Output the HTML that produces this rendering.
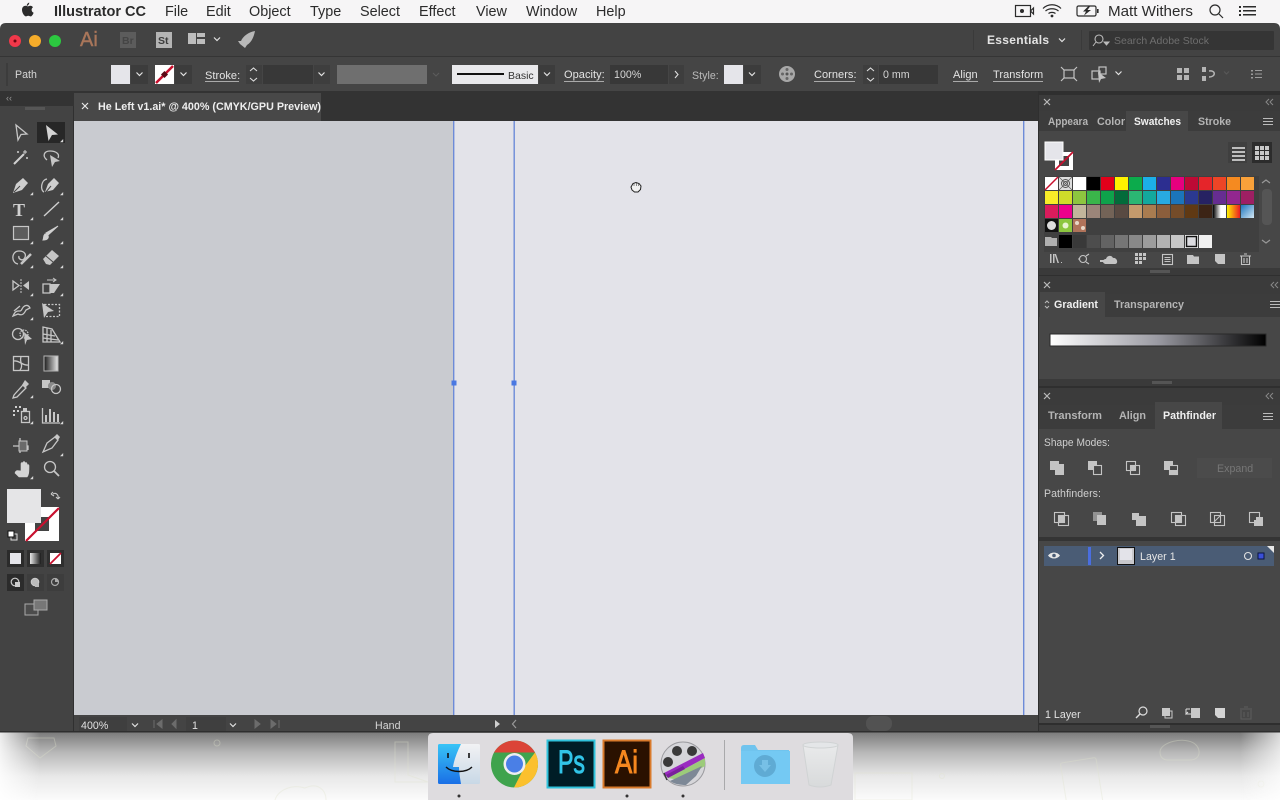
<!DOCTYPE html>
<html><head><meta charset="utf-8"><title>Illustrator CC</title>
<style>
html,body{margin:0;padding:0;background:#fff;width:1280px;height:800px;overflow:hidden}
svg{display:block}
text{font-family:"Liberation Sans",sans-serif}
.m{font-size:14.4px;fill:#2b2b2b}
.c{font-size:10.6px;fill:#d6d6d6;letter-spacing:.05px}
.cb{font-size:11px;fill:#e4e4e4;letter-spacing:.05px}
.tab{font-size:10.6px;fill:#b4b4b4;font-weight:bold}
.ta{font-size:10.6px;fill:#f0f0f0;font-weight:bold}
.i{fill:none;stroke:#c6c6c6;stroke-width:1.3}
.f{fill:#c6c6c6;stroke:none}
.s{fill:none;stroke:#cfcfcf;stroke-width:1.2}
</style></head><body>
<svg width="1280" height="800" viewBox="0 0 1280 800" xmlns="http://www.w3.org/2000/svg">
<defs>
<linearGradient id="wall" x1="0" y1="0" x2="0" y2="1"><stop offset="0" stop-color="#7a7a7a"/><stop offset=".3" stop-color="#b8b8b8"/><stop offset=".65" stop-color="#e8e8e8"/><stop offset="1" stop-color="#fbfbfb"/></linearGradient>
<linearGradient id="wl" x1="0" x2="1" y1="0" y2="0"><stop offset="0" stop-color="#fff" stop-opacity=".85"/><stop offset="1" stop-color="#fff" stop-opacity="0"/></linearGradient>
<linearGradient id="wr" x1="1" x2="0" y1="0" y2="0"><stop offset="0" stop-color="#fff" stop-opacity=".7"/><stop offset="1" stop-color="#fff" stop-opacity="0"/></linearGradient>
<linearGradient id="gr" x1="0" x2="1" y1="0" y2="0"><stop offset="0" stop-color="#fff"/><stop offset=".5" stop-color="#9a9aa2"/><stop offset="1" stop-color="#000"/></linearGradient>
<linearGradient id="g1" x1="0" x2="1" y1="0" y2="0"><stop offset="0" stop-color="#000"/><stop offset=".6" stop-color="#fff"/></linearGradient>
<linearGradient id="g2" x1="0" x2="1" y1="0" y2="0"><stop offset="0" stop-color="#fff200"/><stop offset="1" stop-color="#ed1c24"/></linearGradient>
<linearGradient id="g3" x1="0" x2="1" y1="0" y2="1"><stop offset="0" stop-color="#1c75bc"/><stop offset="1" stop-color="#d4e8f5"/></linearGradient>
<linearGradient id="g4" x1="0" x2="0" y1="0" y2="1"><stop offset="0" stop-color="#e8e8e8"/><stop offset="1" stop-color="#1b1b1b"/></linearGradient>
<linearGradient id="fin" x1="0" x2="0" y1="0" y2="1"><stop offset="0" stop-color="#38c4f6"/><stop offset="1" stop-color="#1a6fe6"/></linearGradient>
<linearGradient id="fin2" x1="0" x2="0" y1="0" y2="1"><stop offset="0" stop-color="#f2f2f4"/><stop offset="1" stop-color="#c8d8e6"/></linearGradient>
<linearGradient id="tr" x1="0" x2="0" y1="0" y2="1"><stop offset="0" stop-color="#e9eaeb"/><stop offset="1" stop-color="#d8dadb"/></linearGradient>
<path id="t" d="M0 3.2L3.2 3.2L3.2 0Z" fill="#d8d8d8"/>
<path id="cv" d="M-3 -1.5L0 1.5L3 -1.5" fill="none" stroke="#e2e2e2" stroke-width="1.2"/>
</defs>

<!-- wallpaper -->
<rect x="0" y="732" width="1280" height="68" fill="url(#wall)"/>
<g fill="none" stroke="#dfe3cb" stroke-width="1" opacity=".35">
<path d="M28 738L54 738L56 746L40 758L26 746Z"/>
<path d="M395 742L408 742L408 775L428 782L395 782Z"/>
<path d="M275 800C278 790 292 784 305 788C318 782 326 790 326 800"/>
<rect x="1064" y="760" width="36" height="50" rx="2" transform="rotate(-9 1082 785)"/>
<path d="M1160 752C1160 742 1185 736 1195 744C1202 750 1200 760 1190 760L1168 760C1163 760 1160 757 1160 752Z"/>
<path d="M855 773L912 773L912 800L855 800Z"/>
<circle cx="942" cy="776" r="2.5"/><circle cx="217" cy="743" r="3"/><circle cx="1261" cy="784" r="3"/>
</g>
<rect x="0" y="732" width="40" height="68" fill="url(#wl)"/>
<rect x="1240" y="732" width="40" height="68" fill="url(#wr)"/>

<!-- menu bar -->
<rect x="0" y="0" width="1280" height="23" fill="#f6f5f6"/>
<path fill="#2b2b2b" d="M27.8 5.6c.8-1 1.4-1.6 1.500-3-1.200.2-2.300 1.200-2.700 2.900.5.2.9.2 1.200.1zM31.600 9.700c0-1.600 1.200-2.300 1.400-2.500-.8-1.100-2-1.400-2.500-1.400-1-.1-1.900.6-2.600.6-.6 0-1.400-.6-2.300-.6-1.900 0-3.600 1.400-3.600 4.100 0 2.900 2.300 6.500 4 6.500.8 0 1.300-.6 2.300-.6 1 0 1.300.6 2.200.6 1.400 0 2.600-2.200 3.100-3.700-1.200-.5-2-1.400-2-2.900z"/>
<text x="54" y="16" class="m" style="font-weight:bold" textLength="92" lengthAdjust="spacingAndGlyphs">Illustrator CC</text>
<text x="165" y="16" class="m">File</text>
<text x="206" y="16" class="m">Edit</text>
<text x="249" y="16" class="m">Object</text>
<text x="310" y="16" class="m">Type</text>
<text x="360" y="16" class="m">Select</text>
<text x="419" y="16" class="m">Effect</text>
<text x="476" y="16" class="m">View</text>
<text x="526" y="16" class="m">Window</text>
<text x="596" y="16" class="m">Help</text>
<g fill="none" stroke="#2b2b2b" stroke-width="1.2">
<rect x="1015.5" y="5.5" width="15" height="11"/><path d="M1033.5 8L1030.5 11L1033.5 14Z"/>
<path d="M1043 8.5C1048 3.5 1056 3.5 1061 8.5M1045.5 11C1049 8 1055 8 1058.5 11M1048.5 13.5C1050.5 12 1053.5 12 1055.5 13.5"/>
<rect x="1077" y="6" width="19" height="10" rx="1.5"/>
<circle cx="1215" cy="10" r="5"/><path d="M1219 14L1223 18"/>
</g>
<circle cx="1022" cy="11" r="2" fill="#2b2b2b"/>
<circle cx="1052" cy="16" r="1.4" fill="#2b2b2b"/>
<path d="M1088 6.5L1083 11.5L1086 11.5L1084 15.5L1091 10L1087.5 10L1090 6.5Z" fill="#2b2b2b"/>
<rect x="1097" y="9" width="1.6" height="4" fill="#2b2b2b"/>
<text x="1108" y="16" class="m" textLength="85" lengthAdjust="spacingAndGlyphs">Matt Withers</text>
<g fill="#2b2b2b"><rect x="1239" y="6" width="2" height="2"/><rect x="1239" y="10" width="2" height="2"/><rect x="1239" y="14" width="2" height="2"/><rect x="1243" y="6" width="13" height="1.5"/><rect x="1243" y="10" width="13" height="1.5"/><rect x="1243" y="14" width="13" height="1.5"/></g>

<!-- window chrome -->
<path d="M0 29Q0 23 6 23L1274 23Q1280 23 1280 29L1280 732L0 732Z" fill="#434343"/>
<rect x="0" y="56" width="1280" height="1" fill="#353535"/>
<rect x="0" y="57" width="1280" height="34" fill="#454545"/>
<rect x="0" y="91" width="1280" height="30" fill="#333"/>

<!-- app bar -->
<circle cx="15" cy="41" r="6" fill="#f0384a"/><circle cx="15" cy="41" r="1.5" fill="#6a0510"/>
<circle cx="35" cy="41" r="6" fill="#f5ac2a"/>
<circle cx="55" cy="41" r="6" fill="#2cc840"/>
<text x="80" y="46" style="font-size:20px;fill:#a9765a;stroke:#a9765a;stroke-width:.4">Ai</text>
<rect x="120" y="32" width="16" height="16" fill="#5c5c5c"/><text x="122" y="44" style="font-size:10.5px;fill:#454545;font-weight:bold">Br</text>
<rect x="156" y="32" width="16" height="16" fill="#b4b4b4"/><text x="158" y="44" style="font-size:10.5px;fill:#3d3d3d;font-weight:bold">St</text>
<path d="M188 33H196V44H188ZM197 33H205V37H197ZM197 39H205V44H197Z" fill="#bdbdbd"/>
<use href="#cv" x="217" y="39"/>
<path d="M255 31C249 32 243 36 241 41L238 41L240 44L245 48L247 45C252 42 254 36 255 31Z" fill="#b8b8b8"/>
<rect x="973" y="30" width="1" height="20" fill="#3a3a3a"/><rect x="1081" y="30" width="1" height="20" fill="#3a3a3a"/>
<text x="987" y="44" style="font-size:12px;fill:#e4e4e4;font-weight:bold" textLength="62" lengthAdjust="spacing">Essentials</text>
<use href="#cv" x="1062" y="40"/>
<rect x="1089" y="31" width="185" height="19" rx="1" fill="#353535"/>
<circle cx="1099" cy="39" r="4" fill="none" stroke="#bbb" stroke-width="1.100"/><path d="M1096 42L1093 46M1104 42L1109 42L1106.500 45Z" stroke="#bbb" fill="#bbb" stroke-width="1"/>
<text x="1114" y="44" style="font-size:10.500px;fill:#6e6e6e" textLength="95" lengthAdjust="spacingAndGlyphs">Search Adobe Stock</text>

<!-- control bar -->
<rect x="6" y="63" width="2" height="23" fill="#3c3c3c"/>
<text x="15" y="78" class="c">Path</text>
<rect x="111" y="65" width="19" height="19" fill="#e5e5ea"/>
<rect x="131" y="65" width="17" height="19" fill="#3c3c3c"/><use href="#cv" x="139.500" y="74"/>
<rect x="155" y="65" width="19" height="19" fill="#fff"/><path d="M156 83L173 66" stroke="#c8102e" stroke-width="2.500"/><rect x="162" y="72" width="5" height="5" fill="#5a0a15" transform="rotate(45 164.500 74.500)"/>
<rect x="175" y="65" width="17" height="19" fill="#3c3c3c"/><use href="#cv" x="183.500" y="74"/>
<text x="205" y="79" class="cb">Stroke:</text><rect x="205" y="81" width="34" height="1" fill="#aaa"/>
<rect x="246" y="65" width="16" height="19" fill="#3e3e3e"/><rect x="263" y="65" width="50" height="19" fill="#383838"/><rect x="314" y="65" width="16" height="19" fill="#3e3e3e"/>
<path d="M250 71L253.500 68L257 71M250 78L253.500 81L257 78" fill="none" stroke="#ddd" stroke-width="1.100"/>
<use href="#cv" x="321.500" y="74"/>
<rect x="337" y="65" width="90" height="19" fill="#6f6f6f"/>
<path d="M433 73L436 76L439 73" fill="none" stroke="#5c5c5c" stroke-width="1.100"/>
<rect x="452" y="65" width="86" height="19" fill="#e9e9ec"/><rect x="457" y="73" width="47" height="2" fill="#111"/>
<text x="508" y="79" style="font-size:10.500px;fill:#333">Basic</text>
<rect x="539" y="65" width="16" height="19" fill="#3c3c3c"/><use href="#cv" x="547" y="74"/>
<text x="564" y="78" class="cb">Opacity:</text><rect x="564" y="81" width="40" height="1" fill="#aaa"/>
<rect x="610" y="65" width="58" height="19" fill="#383838"/><rect x="669" y="65" width="15" height="19" fill="#3e3e3e"/>
<text x="614" y="78" class="c">100%</text>
<path d="M675 71L678 74.500L675 78" fill="none" stroke="#ddd" stroke-width="1.100"/>
<text x="692" y="79" class="c" style="fill:#bbb">Style:</text>
<rect x="724" y="65" width="19" height="19" fill="#e5e5ea"/>
<rect x="744" y="65" width="17" height="19" fill="#3c3c3c"/><use href="#cv" x="752" y="74"/>
<circle cx="787" cy="74" r="8" fill="#a8a8a8"/><circle cx="787" cy="74" r="1.500" fill="#555"/><g fill="#666"><circle cx="787" cy="69.500" r="1.500"/><circle cx="791.500" cy="74" r="1.500"/><circle cx="787" cy="78.500" r="1.500"/><circle cx="782.500" cy="74" r="1.500"/></g>
<text x="814" y="78" class="cb">Corners:</text><rect x="814" y="81" width="41" height="1" fill="#aaa"/>
<rect x="863" y="65" width="15" height="19" fill="#3e3e3e"/><rect x="879" y="65" width="59" height="19" fill="#383838"/>
<path d="M867 71L870.500 68L874 71M867 78L870.500 81L874 78" fill="none" stroke="#ddd" stroke-width="1.100"/>
<text x="883" y="78" class="c">0 mm</text>
<text x="953" y="78" class="cb">Align</text><rect x="953" y="81" width="25" height="1" fill="#aaa"/>
<text x="993" y="78" class="cb">Transform</text><rect x="993" y="81" width="50" height="1" fill="#aaa"/>
<g fill="none" stroke="#c4c4c4" stroke-width="1.200">
<rect x="1064" y="70" width="10" height="8"/><path d="M1061 67L1064 70M1077 67L1074 70M1061 81L1064 78M1077 81L1074 78"/>
<rect x="1092" y="71" width="8" height="8"/><rect x="1099" y="67" width="7" height="7"/>
</g>
<path d="M1098 72L1106 78L1101 79L1099 83Z" fill="#c4c4c4"/>
<use href="#cv" x="1118.500" y="73"/>
<path d="M1177 68H1182V73H1177ZM1184 68H1189V73H1184ZM1177 75H1182V80H1177ZM1184 75H1189V80H1184Z" fill="#b4b4b4"/>
<path d="M1202 67H1206V72H1202ZM1202 76H1206V81H1202Z" fill="#b4b4b4"/><path d="M1209 71C1216 70 1216 77 1209 77" fill="none" stroke="#b4b4b4" stroke-width="1.500"/>
<path d="M1224 71.500L1226.500 74L1229 71.500" stroke="#595959" fill="none"/>
<path d="M1251 70H1253V71.500H1251ZM1251 73.500H1253V75H1251ZM1251 77H1253V78.500H1251ZM1255 70H1262V71H1255ZM1255 73.500H1262V74.500H1255ZM1255 77H1262V78H1255Z" fill="#9c9c9c"/>

<!-- tab row -->
<rect x="74" y="93" width="247" height="28" fill="#484848"/>
<path d="M82 103L88 109M88 103L82 109" stroke="#e8e8e8" stroke-width="1.200"/>
<text x="98" y="110" style="font-size:11px;fill:#eeeeee;font-weight:bold" textLength="223" lengthAdjust="spacingAndGlyphs">He Left v1.ai* @ 400% (CMYK/GPU Preview)</text>

<!-- canvas -->
<rect x="74" y="121" width="380" height="594" fill="#c9cbd0"/>
<rect x="454" y="121" width="584" height="594" fill="#e3e3e9"/>
<rect x="453" y="121" width="1.400" height="594" fill="#6d8bd8"/>
<rect x="513.500" y="121" width="1.400" height="594" fill="#6d8bd8"/>
<rect x="1023" y="121" width="1.400" height="594" fill="#6d8bd8"/>
<rect x="451.500" y="380.500" width="5" height="5" fill="#4a78e2"/><rect x="511.500" y="380.500" width="5" height="5" fill="#4a78e2"/>
<path d="M631 187L633 183.500L636 182.500L639 183.500L641 186L640.500 189.500L638 192H634.500L632 190Z" fill="#f2f2f2" stroke="#222" stroke-width="1"/>
<path d="M634 183.500V186M636.300 183V186M638.500 184V186" stroke="#444" stroke-width=".6"/>

<!-- status bar -->
<rect x="74" y="715" width="964" height="17" fill="#444"/>
<rect x="79" y="717" width="48" height="15" fill="#3f3f3f"/>
<text x="81" y="729" class="c" style="fill:#e2e2e2">400%</text>
<use href="#cv" x="135" y="725"/>
<path d="M154 720V728M162 720L157 724L162 728Z M176 720L172 724L176 728Z" fill="#6c6c6c" stroke="#6c6c6c"/>
<rect x="186" y="717" width="40" height="15" fill="#3f3f3f"/>
<text x="192" y="729" class="c" style="fill:#e2e2e2">1</text>
<use href="#cv" x="233" y="725"/>
<path d="M255 720L260 724L255 728Z M271 720L276 724L271 728Z M279 720V728" fill="#6c6c6c" stroke="#6c6c6c"/>
<text x="375" y="729" class="c" style="fill:#d6d6d6">Hand</text>
<path d="M495 720L500 724L495 728Z" fill="#cfcfcf"/>
<path d="M516 720L512.500 724L516 728" fill="none" stroke="#9a9a9a" stroke-width="1.200"/>
<rect x="866" y="716" width="26" height="15" rx="7" fill="#525252"/>

<!-- toolbox -->
<rect x="0" y="91" width="74" height="641" fill="#434343"/>
<rect x="0" y="91" width="74" height="15" fill="#333"/>
<text x="6" y="101" style="font-size:9px;fill:#9a9a9a">‹‹</text>
<rect x="25" y="107" width="20" height="3" fill="#565656"/>
<rect x="37" y="122" width="28" height="21" fill="#272727"/>
<!-- selection -->
<path d="M16 125L27 134L21 134.500L18 140Z" class="i"/>
<path d="M46 125L58 134.500L52 135L48.500 141Z" fill="#d4d4d4"/><use href="#t" x="60" y="139"/>
<!-- wand / lasso -->
<path d="M14 164L24 154" stroke="#d0d0d0" stroke-width="2"/><path d="M25 150V154M23 152H27M18 151V153M17 152H19M27 157V159M26 158H28" stroke="#d0d0d0"/>
<path d="M47 160C42 156 44 151 50 151C56 151 60 154 58 158" class="i"/><path d="M50 155L60 161L55 162L52 167Z" class="f"/>
<!-- pen / curvature -->
<path d="M13 193L16 184L23 178L28 183L22 190Z" fill="#cfcfcf"/><path d="M14 192L20 186" stroke="#434343"/><use href="#t" x="30" y="192"/>
<path d="M45 192L48 184L54 178L59 183L53 190Z" fill="#cfcfcf"/><path d="M46 192L51 186" stroke="#434343"/><path d="M47 179C41 180 40 190 44 192" class="i"/><use href="#t" x="60" y="192"/>
<!-- type / line -->
<text x="13" y="216" style="font-family:'Liberation Serif',serif;font-size:18px;font-weight:bold;fill:#d0d0d0">T</text><use href="#t" x="30" y="217"/>
<path d="M44 216L59 202" stroke="#cfcfcf" stroke-width="1.400"/><use href="#t" x="60" y="217"/>
<!-- rect / brush -->
<rect x="13.500" y="226.500" width="15" height="13" fill="#5c5c5c" stroke="#c6c6c6" stroke-width="1.200"/><use href="#t" x="30" y="241"/>
<path d="M58 226L48 235L46 233Z M45 234C47 234 49 236 48 238C47 240 44 240 43 240C44 238 43 236 45 234Z" fill="#d0d0d0" stroke="#d0d0d0"/><use href="#t" x="60" y="241"/>
<!-- shaper / eraser -->
<path d="M18 264C11 263 11 251 19 251C25 251 27 255 24 259C22 261 18 259 19 256" class="i"/><path d="M21 264L31 254" stroke="#c6c6c6" stroke-width="2.500"/><use href="#t" x="30" y="265"/>
<path d="M43 259L52 250L59 256L50 265L46 264Z" class="f"/><path d="M46 256L53 262" stroke="#434343"/><use href="#t" x="60" y="265"/>
<!-- reflect / shear -->
<path d="M13 281L19 285.500L13 290Z" class="i"/><path d="M29 281L23 285.500L29 290Z" class="f"/><path d="M21 279V293" stroke="#c6c6c6" stroke-dasharray="2 1"/><use href="#t" x="30" y="293"/>
<path d="M43 284H50V293H43Z" class="i"/><path d="M50 284H60L54 293H50Z" class="f"/><path d="M47 280H55M53 278L56 280L53 282" stroke="#c6c6c6" fill="none"/><use href="#t" x="60" y="293"/>
<!-- warp / free transform -->
<path d="M13 316C17 307 20 314 22 309C24 305 28 304 30 308L26 310C24 314 22 316 18 314ZM14 311L20 306" class="i" stroke-width="1.500"/><use href="#t" x="30" y="317"/>
<rect x="44.500" y="304.500" width="15" height="12" class="i" stroke-dasharray="2 1.500"/><path d="M42 303L54 311L48 312L44 318Z" class="f"/>
<!-- shape builder / perspective grid -->
<circle cx="18" cy="334" r="5.500" class="i"/><circle cx="24" cy="334" r="4" class="i" stroke-dasharray="1.500 1"/><path d="M24 332L32 339L27 340L25 345Z" class="f"/>
<path d="M43 327L43 342L60 342L52 329Z M47 328V342M51 330V342M43 334L55 336M43 338L58 340" class="i" stroke-width="1"/><use href="#t" x="60" y="341"/>
<!-- mesh / gradient -->
<rect x="13.500" y="356.500" width="15" height="14" class="i"/><path d="M14 361C19 360 23 366 28 365M21 357C19 362 24 365 20 370" class="i" stroke-width="1"/>
<rect x="43.500" y="356.500" width="15" height="14" fill="url(#g4)" stroke="#b4b4b4" transform="rotate(90 51 363.500)"/>
<!-- eyedropper / blend -->
<path d="M14 395L23 385L26 388L17 397L13 398Z" class="i"/><path d="M22 385L25 380L29 384L25 388Z" class="f"/><use href="#t" x="30" y="395"/>
<rect x="42" y="380" width="8" height="8" class="f"/><circle cx="52" cy="386" r="4" fill="#8a8a8a"/><circle cx="56" cy="389" r="4.500" class="i"/>
<!-- symbol / graph -->
<path d="M13 410H15V412H13ZM17 410H19V412H17ZM13 414H15V416H13ZM15 406H17V408H15ZM19 406H21V408H19Z" fill="#d0d0d0"/>
<rect x="21.500" y="411.500" width="8" height="11" class="i"/><rect x="23" y="408" width="4" height="3" class="f"/><circle cx="25.500" cy="418" r="1.500" class="i"/><use href="#t" x="30" y="421"/>
<path d="M42.500 408V423H60" class="i"/><path d="M45 415H47V422H45ZM49 409H51V422H49ZM53 412H55V422H53ZM57 414H59V422H57Z" class="f"/><use href="#t" x="60" y="421"/>
<!-- artboard / slice -->
<path d="M13 446H28V450M20 438V453" class="i" stroke-width="1"/><rect x="19" y="441" width="8" height="10" fill="#6a6a6a" stroke="#c6c6c6"/>
<path d="M43 452L47 443L55 437L58 440L52 448Z" class="i"/><path d="M54 437L58 440L60 437L57 434Z" class="f"/><use href="#t" x="60" y="453"/>
<!-- hand / zoom -->
<path d="M15 473L19 477H27C29 475 29 471 29 466C29 464 27 464 27 466V469V464C27 462 25 462 25 464V468V463C25 461 23 461 23 463V468V464C23 462 21 462 21 464V471C19 471 16 469 15 473Z" fill="#d4d4d4" stroke="#d4d4d4" stroke-width=".6"/><use href="#t" x="30" y="476"/>
<circle cx="50" cy="467" r="5.500" fill="none" stroke="#c6c6c6" stroke-width="1.300"/><path d="M54 471L59 476" stroke="#c6c6c6" stroke-width="1.800"/>
<!-- fill/stroke -->
<rect x="25" y="507" width="34" height="34" fill="#fff"/>
<rect x="35" y="517" width="14" height="14" fill="#434343"/>
<path d="M26 541L59 508" stroke="#c8102e" stroke-width="2.200"/>
<rect x="7" y="489" width="34" height="34" fill="#e5e5e7"/>
<path d="M53 494C56 492 59 495 58 499M51 494L53 492M51 494L54 496M58 499L56 497M58 499L60 497" fill="none" stroke="#c8c8c8" stroke-width="1.100"/>
<rect x="11" y="534" width="6" height="6" fill="none" stroke="#ddd"/><rect x="8" y="531" width="6" height="6" fill="#fff" stroke="#111"/>
<rect x="7" y="550" width="17" height="17" fill="#2b2b2b"/><rect x="10" y="553" width="11" height="11" fill="#e5e5ea"/>
<rect x="27" y="550" width="17" height="17" fill="#2f2f2f"/><rect x="30" y="553" width="11" height="11" fill="url(#g4)" transform="rotate(-90 35.500 558.500)"/>
<rect x="47" y="550" width="17" height="17" fill="#2f2f2f"/><rect x="50" y="553" width="11" height="11" fill="#fff"/><path d="M50 564L61 553" stroke="#c8102e" stroke-width="1.800"/>
<rect x="7" y="574" width="17" height="17" fill="#2b2b2b"/><rect x="27" y="574" width="17" height="17" fill="#3d3d3d"/><rect x="47" y="574" width="17" height="17" fill="#3d3d3d"/>
<circle cx="15" cy="582" r="3.800" fill="none" stroke="#ccc" stroke-width="1.200"/><rect x="15" y="582" width="5" height="5" fill="#ccc"/>
<circle cx="35" cy="582" r="3.800" fill="#bbb" stroke="#ccc"/><rect x="35" y="583" width="4" height="4" fill="#bbb"/>
<circle cx="55" cy="582" r="3.500" fill="none" stroke="#aaa" stroke-width="1.200"/><rect x="55" y="579" width="3" height="3" fill="#aaa"/>
<rect x="25" y="604" width="13" height="11" fill="#4c4c4c" stroke="#aaa"/><rect x="34" y="600" width="13" height="10" fill="#777" stroke="#aaa"/>
<rect x="73" y="106" width="1" height="626" fill="#303030"/>

<!-- right panels -->
<rect x="1038" y="91" width="242" height="641" fill="#2f2f2f"/>
<!-- swatches panel -->
<rect x="1039" y="95" width="241" height="16" fill="#3b3b3b"/>
<rect x="1039" y="111" width="241" height="157" fill="#474747"/>
<rect x="1039" y="111" width="241" height="20" fill="#3c3c3c"/>
<rect x="1126" y="111" width="62" height="20" fill="#474747"/>
<path d="M1044 99L1050 105M1050 99L1044 105" stroke="#bbb" stroke-width="1.200"/>
<path d="M1269 99L1266 102L1269 105M1273 99L1270 102L1273 105" fill="none" stroke="#888"/>
<text x="1048" y="125" class="tab" textLength="40" lengthAdjust="spacingAndGlyphs">Appeara</text>
<text x="1097" y="125" class="tab" textLength="28" lengthAdjust="spacingAndGlyphs">Color</text>
<text x="1134" y="125" class="ta" textLength="47" lengthAdjust="spacingAndGlyphs">Swatches</text>
<text x="1198" y="125" class="tab" textLength="33" lengthAdjust="spacingAndGlyphs">Stroke</text>
<path d="M1263 118H1273V119H1263ZM1263 121H1273V122H1263ZM1263 124H1273V125H1263Z" fill="#bbb"/>
<rect x="1055" y="152" width="18" height="18" fill="#fff"/><rect x="1059" y="156" width="10" height="10" fill="#444"/><path d="M1055 170L1073 152" stroke="#c8102e" stroke-width="1.800"/>
<rect x="1045" y="142" width="18" height="18" fill="#e5e5ea" stroke="#fff" stroke-width="1"/>
<rect x="1228" y="142" width="19" height="21" fill="#3f3f3f"/><rect x="1252" y="142" width="20" height="21" fill="#2c2c2c"/>
<path d="M1232 147H1245V149H1232ZM1232 151H1245V153H1232ZM1232 155H1245V157H1232ZM1232 159H1245V161H1232Z" fill="#bdbdbd"/>
<path d="M1255 146h4v4h-4zM1260 146h4v4h-4zM1265 146h4v4h-4zM1255 151h4v4h-4zM1260 151h4v4h-4zM1265 151h4v4h-4zM1255 156h4v4h-4zM1260 156h4v4h-4zM1265 156h4v4h-4z" fill="#c8c8c8"/>
<rect x="1044" y="176" width="215" height="76" fill="#404040"/>
<g>
<rect x="1045" y="177" width="13" height="13" fill="#fff"/><path d="M1045 190L1058 177" stroke="#c8102e" stroke-width="1.500"/>
<rect x="1059" y="177" width="13" height="13" fill="#ddd"/><circle cx="1065.500" cy="183.500" r="4" fill="none" stroke="#555"/><circle cx="1065.500" cy="183.500" r="2" fill="none" stroke="#555"/><path d="M1059 177L1072 190M1072 177L1059 190" stroke="#555" stroke-width=".6"/>
<rect x="1073" y="177" width="13" height="13" fill="#fff"/>
<rect x="1087" y="177" width="13" height="13" fill="#000"/>
<rect x="1101" y="177" width="13" height="13" fill="#e2001a"/>
<rect x="1115" y="177" width="13" height="13" fill="#fff200"/>
<rect x="1129" y="177" width="13" height="13" fill="#0cab4c"/>
<rect x="1143" y="177" width="13" height="13" fill="#1cafe8"/>
<rect x="1157" y="177" width="13" height="13" fill="#2c2e90"/>
<rect x="1171" y="177" width="13" height="13" fill="#e6007e"/>
<rect x="1185" y="177" width="13" height="13" fill="#bd0a35"/>
<rect x="1199" y="177" width="13" height="13" fill="#e5252a"/>
<rect x="1213" y="177" width="13" height="13" fill="#ed4526"/>
<rect x="1227" y="177" width="13" height="13" fill="#f58a20"/>
<rect x="1241" y="177" width="13" height="13" fill="#f9a13a"/>
<rect x="1045" y="191" width="13" height="13" fill="#f8ec28"/>
<rect x="1059" y="191" width="13" height="13" fill="#cfdc2a"/>
<rect x="1073" y="191" width="13" height="13" fill="#8dc63f"/>
<rect x="1087" y="191" width="13" height="13" fill="#3ab54a"/>
<rect x="1101" y="191" width="13" height="13" fill="#0ea24b"/>
<rect x="1115" y="191" width="13" height="13" fill="#036b3a"/>
<rect x="1129" y="191" width="13" height="13" fill="#2bb673"/>
<rect x="1143" y="191" width="13" height="13" fill="#13a89e"/>
<rect x="1157" y="191" width="13" height="13" fill="#28aae1"/>
<rect x="1171" y="191" width="13" height="13" fill="#1b75bb"/>
<rect x="1185" y="191" width="13" height="13" fill="#2b3990"/>
<rect x="1199" y="191" width="13" height="13" fill="#262262"/>
<rect x="1213" y="191" width="13" height="13" fill="#662d91"/>
<rect x="1227" y="191" width="13" height="13" fill="#92278f"/>
<rect x="1241" y="191" width="13" height="13" fill="#9e1f63"/>
<rect x="1045" y="205" width="13" height="13" fill="#da1c5c"/>
<rect x="1059" y="205" width="13" height="13" fill="#ec008c"/>
<rect x="1073" y="205" width="13" height="13" fill="#c2b59b"/>
<rect x="1087" y="205" width="13" height="13" fill="#9b8579"/>
<rect x="1101" y="205" width="13" height="13" fill="#736357"/>
<rect x="1115" y="205" width="13" height="13" fill="#594a42"/>
<rect x="1129" y="205" width="13" height="13" fill="#c49a6c"/>
<rect x="1143" y="205" width="13" height="13" fill="#a97c50"/>
<rect x="1157" y="205" width="13" height="13" fill="#8b5e3c"/>
<rect x="1171" y="205" width="13" height="13" fill="#754c29"/>
<rect x="1185" y="205" width="13" height="13" fill="#603913"/>
<rect x="1199" y="205" width="13" height="13" fill="#3c2415"/>
<rect x="1213" y="205" width="13" height="13" fill="url(#g1)"/>
<rect x="1227" y="205" width="13" height="13" fill="url(#g2)"/>
<rect x="1241" y="205" width="13" height="13" fill="url(#g3)"/>
<rect x="1045" y="219" width="13" height="13" fill="#111"/><circle cx="1051.500" cy="225.500" r="4.500" fill="#ddd"/>
<rect x="1059" y="219" width="13" height="13" fill="#8cc63f"/><circle cx="1065.500" cy="225.500" r="3" fill="#e8f3d0"/>
<rect x="1073" y="219" width="13" height="13" fill="#b0735a"/><circle cx="1077" cy="223" r="2" fill="#e8d8c8"/><circle cx="1083" cy="228" r="2" fill="#e8d8c8"/>
<path d="M1045 237H1051L1052 238H1057V246H1045Z" fill="#b0b0b0"/>
<rect x="1059" y="235" width="13" height="13" fill="#000"/>
<rect x="1073" y="235" width="13" height="13" fill="#393939"/>
<rect x="1087" y="235" width="13" height="13" fill="#4d4d4d"/>
<rect x="1101" y="235" width="13" height="13" fill="#636363"/>
<rect x="1115" y="235" width="13" height="13" fill="#767676"/>
<rect x="1129" y="235" width="13" height="13" fill="#888"/>
<rect x="1143" y="235" width="13" height="13" fill="#9c9c9c"/>
<rect x="1157" y="235" width="13" height="13" fill="#b2b2b2"/>
<rect x="1171" y="235" width="13" height="13" fill="#c7c7c7"/>
<rect x="1185" y="235" width="13" height="13" fill="#fff"/><rect x="1186.500" y="236.500" width="10" height="10" fill="#dcdce0" stroke="#111" stroke-width="1.500"/>
<rect x="1199" y="235" width="13" height="13" fill="#f0f0f0"/>
</g>
<path d="M1262 183L1266 180L1270 183M1262 240L1266 243L1270 240" fill="none" stroke="#999" stroke-width="1.200"/>
<rect x="1262" y="189" width="10" height="36" rx="4" fill="#555"/>
<g fill="#c4c4c4">
<path d="M1050 254h1.500v9h-1.500zM1053 254h1.500v9h-1.500zM1056 254l3 9h-1.500l-3-9z"/>
<path d="M1061 262h1v1h-1z"/>
<path d="M1106 264C1102 264 1102 259 1106 259C1107 255 1112 255 1113 258C1117 257 1119 264 1115 264ZM1100 260H1105V262H1100Z"/>
<path d="M1135 253h3v3h-3zM1139 253h3v3h-3zM1143 253h3v3h-3zM1135 257h3v3h-3zM1139 257h3v3h-3zM1143 257h3v3h-3zM1135 261h3v3h-3zM1139 261h3v3h-3z"/>
<path d="M1187 255H1193L1194 256.500H1199V264H1187Z"/>
<path d="M1215 254H1225V264H1218L1215 261Z"/>
</g>
<g fill="none" stroke="#c4c4c4" stroke-width="1.100">
<circle cx="1083" cy="259" r="3.500"/><path d="M1078 259H1080M1086 256L1089 254M1086 262L1089 264"/>
<rect x="1162.500" y="254.500" width="10" height="10"/><path d="M1164.500 257.500H1170.500M1164.500 259.500H1170.500M1164.500 261.500H1170.500"/>
<path d="M1240 256H1251M1241.500 256.500V264.500H1249.500V256.500M1244 254H1247M1244 258V263M1247 258V263"/>
</g>
<rect x="1039" y="268" width="241" height="7" fill="#3a3a3a"/>
<rect x="1150" y="270" width="20" height="3" fill="#555"/>

<!-- gradient panel -->
<rect x="1039" y="276" width="241" height="18" fill="#3b3b3b"/>
<rect x="1039" y="294" width="241" height="85" fill="#474747"/>
<rect x="1039" y="294" width="241" height="23" fill="#3c3c3c"/>
<rect x="1040" y="292" width="65" height="25" fill="#474747"/>
<path d="M1044 282L1050 288M1050 282L1044 288" stroke="#bbb" stroke-width="1.200"/>
<path d="M1274 282L1271 285L1274 288M1278 282L1275 285L1278 288" fill="none" stroke="#888"/>
<path d="M1045 303L1047 301L1049 303M1045 306L1047 308L1049 306" fill="none" stroke="#bbb"/>
<text x="1054" y="308" class="ta" textLength="44" lengthAdjust="spacingAndGlyphs">Gradient</text>
<text x="1114" y="308" class="tab" textLength="70" lengthAdjust="spacingAndGlyphs">Transparency</text>
<path d="M1270 301H1280V302H1270ZM1270 304H1280V305H1270ZM1270 307H1280V308H1270Z" fill="#bbb"/>
<rect x="1050" y="334" width="216" height="12" fill="url(#gr)" stroke="#2a2a2a"/>
<rect x="1039" y="379" width="241" height="7" fill="#3a3a3a"/>
<rect x="1152" y="381" width="20" height="3" fill="#555"/>

<!-- pathfinder panel -->
<rect x="1039" y="388" width="241" height="17" fill="#3b3b3b"/>
<rect x="1039" y="405" width="241" height="132" fill="#474747"/>
<rect x="1039" y="405" width="241" height="24" fill="#3c3c3c"/>
<rect x="1155" y="402" width="67" height="27" fill="#474747"/>
<path d="M1044 393L1050 399M1050 393L1044 399" stroke="#bbb" stroke-width="1.200"/>
<path d="M1269 393L1266 396L1269 399M1273 393L1270 396L1273 399" fill="none" stroke="#888"/>
<text x="1048" y="419" class="tab" textLength="54" lengthAdjust="spacingAndGlyphs">Transform</text>
<text x="1119" y="419" class="tab" textLength="27" lengthAdjust="spacingAndGlyphs">Align</text>
<text x="1163" y="419" class="ta" textLength="53" lengthAdjust="spacingAndGlyphs">Pathfinder</text>
<path d="M1263 413H1273V414H1263ZM1263 416H1273V417H1263ZM1263 419H1273V420H1263Z" fill="#bbb"/>
<text x="1044" y="446" class="c" style="fill:#cfcfcf" textLength="66" lengthAdjust="spacingAndGlyphs">Shape Modes:</text>
<g fill="#c4c4c4">
<path d="M1050 461H1059V464H1064V475H1055V470H1050Z"/>
<path d="M1088 461H1097V465H1093V470H1088Z"/>
<path d="M1130 465H1136V471H1130Z"/>
<path d="M1164 461H1173V465H1169V470H1164ZM1173 470H1178V475H1169V470Z"/>
</g>
<g fill="none" stroke="#c4c4c4" stroke-width="1.100">
<rect x="1093.500" y="465.500" width="8" height="9"/>
<rect x="1126.500" y="461.500" width="9" height="9"/><rect x="1130.500" y="465.500" width="9" height="9"/>
<rect x="1169.500" y="465.500" width="8" height="9"/>
</g>
<rect x="1197" y="458" width="75" height="20" fill="#4b4b4b"/>
<text x="1217" y="472" class="c" style="fill:#777">Expand</text>
<text x="1044" y="497" class="c" style="fill:#cfcfcf" textLength="57" lengthAdjust="spacingAndGlyphs">Pathfinders:</text>
<g fill="#c4c4c4">
<path d="M1058 516H1064V522H1058Z"/>
<path d="M1093 512H1102V515H1106V525H1097V521H1093Z" opacity=".6"/><path d="M1097 515H1106V525H1097Z"/>
<path d="M1132 517V513H1139V516H1146V526H1136V520H1132Z"/>
<path d="M1176 516H1181V522H1176Z"/>
<path d="M1256 517H1263V526H1254V520H1256Z"/>
</g>
<g fill="none" stroke="#c4c4c4" stroke-width="1.100">
<rect x="1054.500" y="512.500" width="10" height="10"/><rect x="1058.500" y="515.500" width="10" height="10"/>
<rect x="1171.500" y="512.500" width="10" height="10"/><rect x="1175.500" y="515.500" width="10" height="10"/>
<rect x="1210.500" y="512.500" width="10" height="10"/><rect x="1214.500" y="515.500" width="10" height="10"/><path d="M1214 522L1220 516"/>
<rect x="1249.500" y="512.500" width="10" height="10"/>
</g>
<rect x="1039" y="537" width="241" height="4" fill="#343434"/>

<!-- layers panel -->
<rect x="1039" y="541" width="241" height="183" fill="#474747"/>
<rect x="1044" y="546" width="230" height="20" fill="#4a5c75"/>
<path d="M1267 546H1274V553Z" fill="#e8e8e8"/>
<path d="M1048 555.500C1051 551.500 1057 551.500 1060 555.500C1057 559.500 1051 559.500 1048 555.500Z" fill="#e6e6e6"/><circle cx="1054" cy="555.500" r="1.800" fill="#4a5c75"/>
<rect x="1088" y="547" width="3" height="18" fill="#4a6ee0"/>
<path d="M1100 552L1103.500 555.500L1100 559" fill="none" stroke="#eee" stroke-width="1.300"/>
<rect x="1117.500" y="547.500" width="17" height="17" fill="#c8c8cc" stroke="#111"/><rect x="1120" y="549" width="12" height="11" fill="#e3e3e9"/>
<text x="1140" y="560" class="c" style="fill:#e6e6e6">Layer 1</text>
<circle cx="1248" cy="556" r="3.500" fill="none" stroke="#e0e0e0" stroke-width="1.100"/>
<rect x="1258" y="553" width="6" height="6" fill="#3a4fd8" stroke="#0b1440"/>
<text x="1045" y="718" class="c" style="fill:#e2e2e2">1 Layer</text>
<circle cx="1143" cy="711" r="4" fill="none" stroke="#ddd" stroke-width="1.200"/><path d="M1140 714L1136 718" stroke="#ddd" stroke-width="1.400"/>
<rect x="1162" y="708" width="8" height="8" fill="#c8c8c8"/><rect x="1165" y="711" width="7" height="7" fill="none" stroke="#c8c8c8"/>
<path d="M1186 709H1190M1186 709V714L1188 712M1191 714H1186" stroke="#ddd" fill="none"/><rect x="1191" y="708" width="9" height="10" fill="#c8c8c8"/>
<path d="M1215 708H1225V718H1218L1215 715Z" fill="#d4d4d4"/>
<g fill="none" stroke="#5c5c5c" stroke-width="1.100"><path d="M1240 709H1252M1241 710V719H1251V710M1244 707H1248M1244 712V717M1248 712V717"/></g>
<rect x="1039" y="723" width="241" height="2" fill="#2e2e2e"/>
<rect x="1039" y="725" width="241" height="7" fill="#3e3e3e"/>
<rect x="1150" y="725" width="20" height="3" fill="#555"/>
<rect x="0" y="731" width="1280" height="1.500" fill="#2e2e2e"/>

<!-- dock -->
<path d="M428 800V738Q428 733 433 733H848Q853 733 853 738V800Z" fill="#dedcdf"/>
<!-- finder -->
<rect x="438" y="744" width="42" height="40" rx="1.500" fill="url(#fin2)"/>
<path d="M439.500 744H461C457 752 454 760 453 767H459C459 772 460 778 461 784H439.500Q438 784 438 782.500V745.500Q438 744 439.500 744Z" fill="url(#fin)"/>
<path d="M448 753V758M469 753V758" stroke="#111" stroke-width="1.600"/>
<path d="M446 767C452 773 466 773 472 767" stroke="#111" fill="none" stroke-width="1.400"/>
<!-- chrome -->
<circle cx="514.500" cy="764" r="23.500" fill="#3fa34d"/>
<path d="M494 752.500A23.500 23.500 0 0 1 535 752.500H514.500Z" fill="#db4437"/>
<path d="M535 752.500A23.500 23.500 0 0 1 514 787.500L525 766Z" fill="#fbc02d"/>
<path d="M494 752.500L505 770L514.500 764Z" fill="#3fa34d"/>
<circle cx="514.500" cy="764" r="11" fill="#eee"/><circle cx="514.500" cy="764" r="8.500" fill="#4a7fe6"/>
<!-- ps -->
<rect x="547.500" y="740.500" width="47" height="47" fill="#001d26" stroke="#2fc3dc" stroke-width="2"/>
<text x="558" y="773" style="font-size:32px;fill:#31c5e8;stroke:#31c5e8;stroke-width:.9" textLength="27" lengthAdjust="spacingAndGlyphs">Ps</text>
<!-- ai -->
<rect x="603.500" y="740.500" width="47" height="47" fill="#2a1100" stroke="#d97a2b" stroke-width="2"/>
<text x="615" y="773" style="font-size:32px;fill:#f5871f;stroke:#f5871f;stroke-width:.9" textLength="23" lengthAdjust="spacingAndGlyphs">Ai</text>
<!-- screenflow -->
<circle cx="683" cy="764" r="22" fill="#d6d6da" stroke="#9b9b9f" stroke-width="1"/>
<circle cx="677" cy="751" r="5" fill="#3a3a3a"/><circle cx="692" cy="751" r="5" fill="#3a3a3a"/><circle cx="668" cy="762" r="5" fill="#3a3a3a"/>
<path d="M664 773L703 753L705 758L668 778Z" fill="#9a2cc0"/>
<path d="M668 778L705 758L705 766L680 780Z" fill="#9ccb7a"/>
<path d="M666 775L683 766L685 769L668 778Z" fill="#7a209c"/>
<path d="M670 781L702 766L696 776L686 785C680 785 674 784 670 781Z" fill="#7d8896"/>
<path d="M664 773L667 780" stroke="#3a3a3a" stroke-width="1.500"/>
<!-- divider -->
<rect x="724" y="740" width="1" height="50" fill="#a9a9ab"/>
<!-- folder -->
<path d="M741 784V748Q741 745 744 745H755L758 750H789V784Z" fill="#70c4ee"/>
<rect x="741" y="751" width="49" height="33" fill="#74c9f3"/>
<circle cx="765" cy="766" r="11" fill="#5fabd4"/><path d="M762 760H768V765H771L765 772L759 765H762Z" fill="#77c0e6"/>
<!-- trash -->
<path d="M803 745H838L831 785Q820 789 809 785Z" fill="url(#tr)" stroke="#d0d3d4"/>
<ellipse cx="820.500" cy="745" rx="17.500" ry="3" fill="#e4e6e8" stroke="#d0d3d4"/>
<!-- dots -->
<circle cx="459" cy="796" r="1.500" fill="#333"/><circle cx="627" cy="796" r="1.500" fill="#333"/><circle cx="683" cy="796" r="1.500" fill="#333"/>
</svg>
</body></html>
